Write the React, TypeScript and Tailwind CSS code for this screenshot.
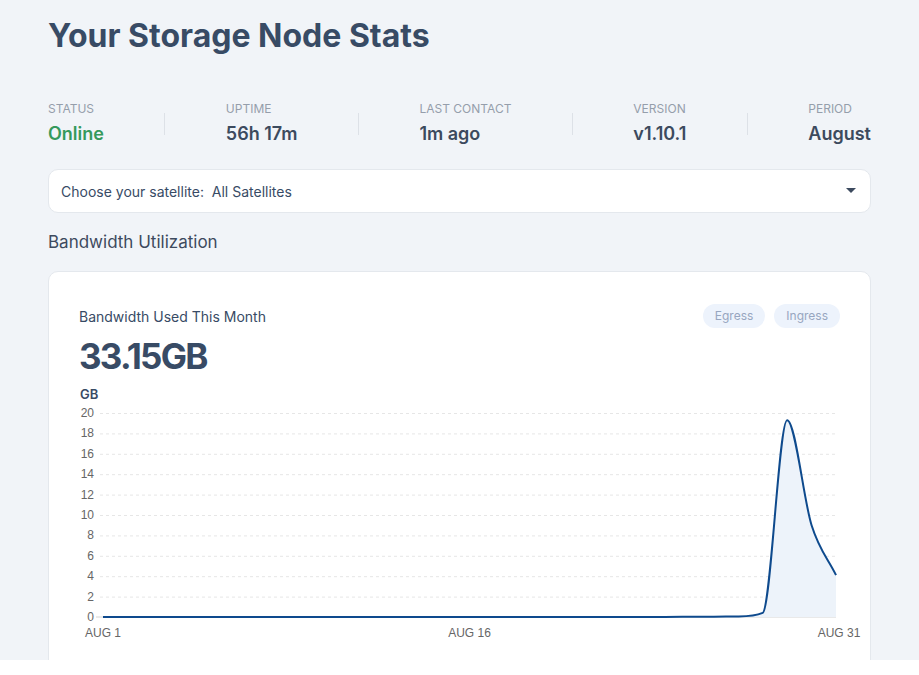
const stats = [
  { label: "Status", value: "Online", online: true },
  { label: "Uptime", value: "56h 17m" },
  { label: "Last Contact", value: "1m ago" },
  { label: "Version", value: "v1.10.1" },
  { label: "Period", value: "August" },
];

// daily bandwidth in GB, Aug 1..31
const usage = [
  0.01, 0.01, 0.01, 0.01, 0.01, 0.01, 0.01, 0.01, 0.01, 0.01,
  0.01, 0.01, 0.01, 0.01, 0.01, 0.01, 0.01, 0.01, 0.01, 0.01,
  0.01, 0.01, 0.01, 0.01, 0.02, 0.03, 0.06, 0.4, 19.3, 9.0, 4.1,
];

// chart geometry (svg local coords)
const X0 = 54;
const X1 = 787;
const Y0 = 232;
const PER_GB = 10.2;

function monotonePath(pts: [number, number][]) {
  const n = pts.length;
  const d: number[] = [];
  const m: number[] = [];
  for (let i = 0; i < n - 1; i++) {
    d.push((pts[i + 1][1] - pts[i][1]) / (pts[i + 1][0] - pts[i][0]));
  }
  for (let i = 0; i < n; i++) {
    if (i === 0) m.push(d[0]);
    else if (i === n - 1) m.push(d[n - 2]);
    else if (d[i - 1] * d[i] <= 0) m.push(0);
    else m.push((d[i - 1] + d[i]) / 2);
  }
  for (let i = 0; i < n - 1; i++) {
    if (d[i] === 0) {
      m[i] = 0;
      m[i + 1] = 0;
      continue;
    }
    const a = m[i] / d[i];
    const b = m[i + 1] / d[i];
    const s = a * a + b * b;
    if (s > 9) {
      const t = 3 / Math.sqrt(s);
      m[i] = t * a * d[i];
      m[i + 1] = t * b * d[i];
    }
  }
  let p = `M${pts[0][0]},${pts[0][1]}`;
  for (let i = 0; i < n - 1; i++) {
    const h = (pts[i + 1][0] - pts[i][0]) / 3;
    p += ` C${pts[i][0] + h},${pts[i][1] + m[i] * h} ${pts[i + 1][0] - h},${pts[i + 1][1] - m[i + 1] * h} ${pts[i + 1][0]},${pts[i + 1][1]}`;
  }
  return p;
}

function BandwidthChart() {
  const step = (X1 - X0) / (usage.length - 1);
  const pts: [number, number][] = usage.map((v, i) => [X0 + i * step, Y0 - v * PER_GB]);
  const line = monotonePath(pts);
  const area = `${line} L${X1},${Y0} L${X0},${Y0} Z`;
  const ticks = [0, 2, 4, 6, 8, 10, 12, 14, 16, 18, 20];

  return (
    <svg width="821" height="275" className="block mt-[9px] overflow-visible">
      <text x="31" y="14" fontSize="13" fontWeight="600" fill="#384b65" fontFamily="Inter, sans-serif">
        GB
      </text>
      {ticks.map((t) => {
        const y = Y0 - t * PER_GB;
        return (
          <g key={t}>
            <text
              x="45"
              y={y + 4}
              textAnchor="end"
              fontSize="12"
              fill="#666"
              fontFamily="'Liberation Sans', Arial, sans-serif"
            >
              {t}
            </text>
            {t === 0 ? (
              <line x1="47" y1={y} x2={X1} y2={y} stroke="#d4d4d4" strokeWidth="1" />
            ) : (
              <line x1="51" y1={y + 0.5} x2={X1} y2={y + 0.5} stroke="#e6e6e6" strokeWidth="1" strokeDasharray="3 3" />
            )}
          </g>
        );
      })}
      <path d={area} fill="#edf3fa" />
      <path d={line} fill="none" stroke="#0e4a8d" strokeWidth="2" />
      {[
        { x: X0, t: "AUG 1" },
        { x: (X0 + X1) / 2, t: "AUG 16" },
        { x: X1 + 3, t: "AUG 31" },
      ].map((l) => (
        <text
          key={l.t}
          x={l.x}
          y="252"
          textAnchor="middle"
          fontSize="12"
          fill="#666"
          fontFamily="'Liberation Sans', Arial, sans-serif"
        >
          {l.t}
        </text>
      ))}
    </svg>
  );
}

export default function App() {
  return (
    <div className="h-[660px] overflow-hidden bg-[#f1f4f8] px-12 pt-[17px] font-['Inter',sans-serif] text-[#384b65]">
      <h1 className="text-[32px] leading-[38px] font-bold">Your Storage Node Stats</h1>

      <div className="mt-[46px] flex items-center justify-between">
        {stats.map((s, i) => (
          <div key={s.label} className="contents">
            {i > 0 && <div className="h-[22px] w-px bg-[#dde1e7]" />}
            <div className="flex flex-col">
              <span className="text-[12px] leading-4 uppercase text-[#959eab]">{s.label}</span>
              <span
                className={`mt-[5px] text-[18px] leading-6 font-semibold ${s.online ? "text-[#35995c]" : "text-[#3c4a5e]"}`}
              >
                {s.value}
              </span>
            </div>
          </div>
        ))}
      </div>

      <div className="mt-[23px] flex h-[44px] items-center justify-between rounded-[10px] border border-[#e4e8ed] bg-white pl-[12px] pr-[14px]">
        <span className="text-[14px] text-[#384b65] whitespace-pre">Choose your satellite:  All Satellites</span>
        <svg width="10" height="6" viewBox="0 0 10 6">
          <path d="M0 0 L10 0 L5 5 Z" fill="#3c4a5e" />
        </svg>
      </div>

      <h2 className="mt-[17px] text-[17px] leading-6 text-[#3d4a5e]">Bandwidth Utilization</h2>

      <div className="mt-[17px] rounded-[10px] border border-[#e4e8ed] bg-white pt-8 h-[420px]">
        <div className="flex items-center justify-between px-[30px]">
          <span className="text-[14px] text-[#384b65]">Bandwidth Used This Month</span>
          <div className="flex gap-[9px]">
            <span className="flex h-6 items-center rounded-full bg-[#edf3fc] px-3 text-[12px] text-[#97a6c0]">Egress</span>
            <span className="flex h-6 items-center rounded-full bg-[#edf3fc] px-3 text-[12px] text-[#97a6c0]">Ingress</span>
          </div>
        </div>
        <div className="mt-2 px-[30px] text-[35px] leading-[40px] font-bold tracking-[-0.05em] text-[#384b65]">33.15GB</div>
        <BandwidthChart />
      </div>
    </div>
  );
}
